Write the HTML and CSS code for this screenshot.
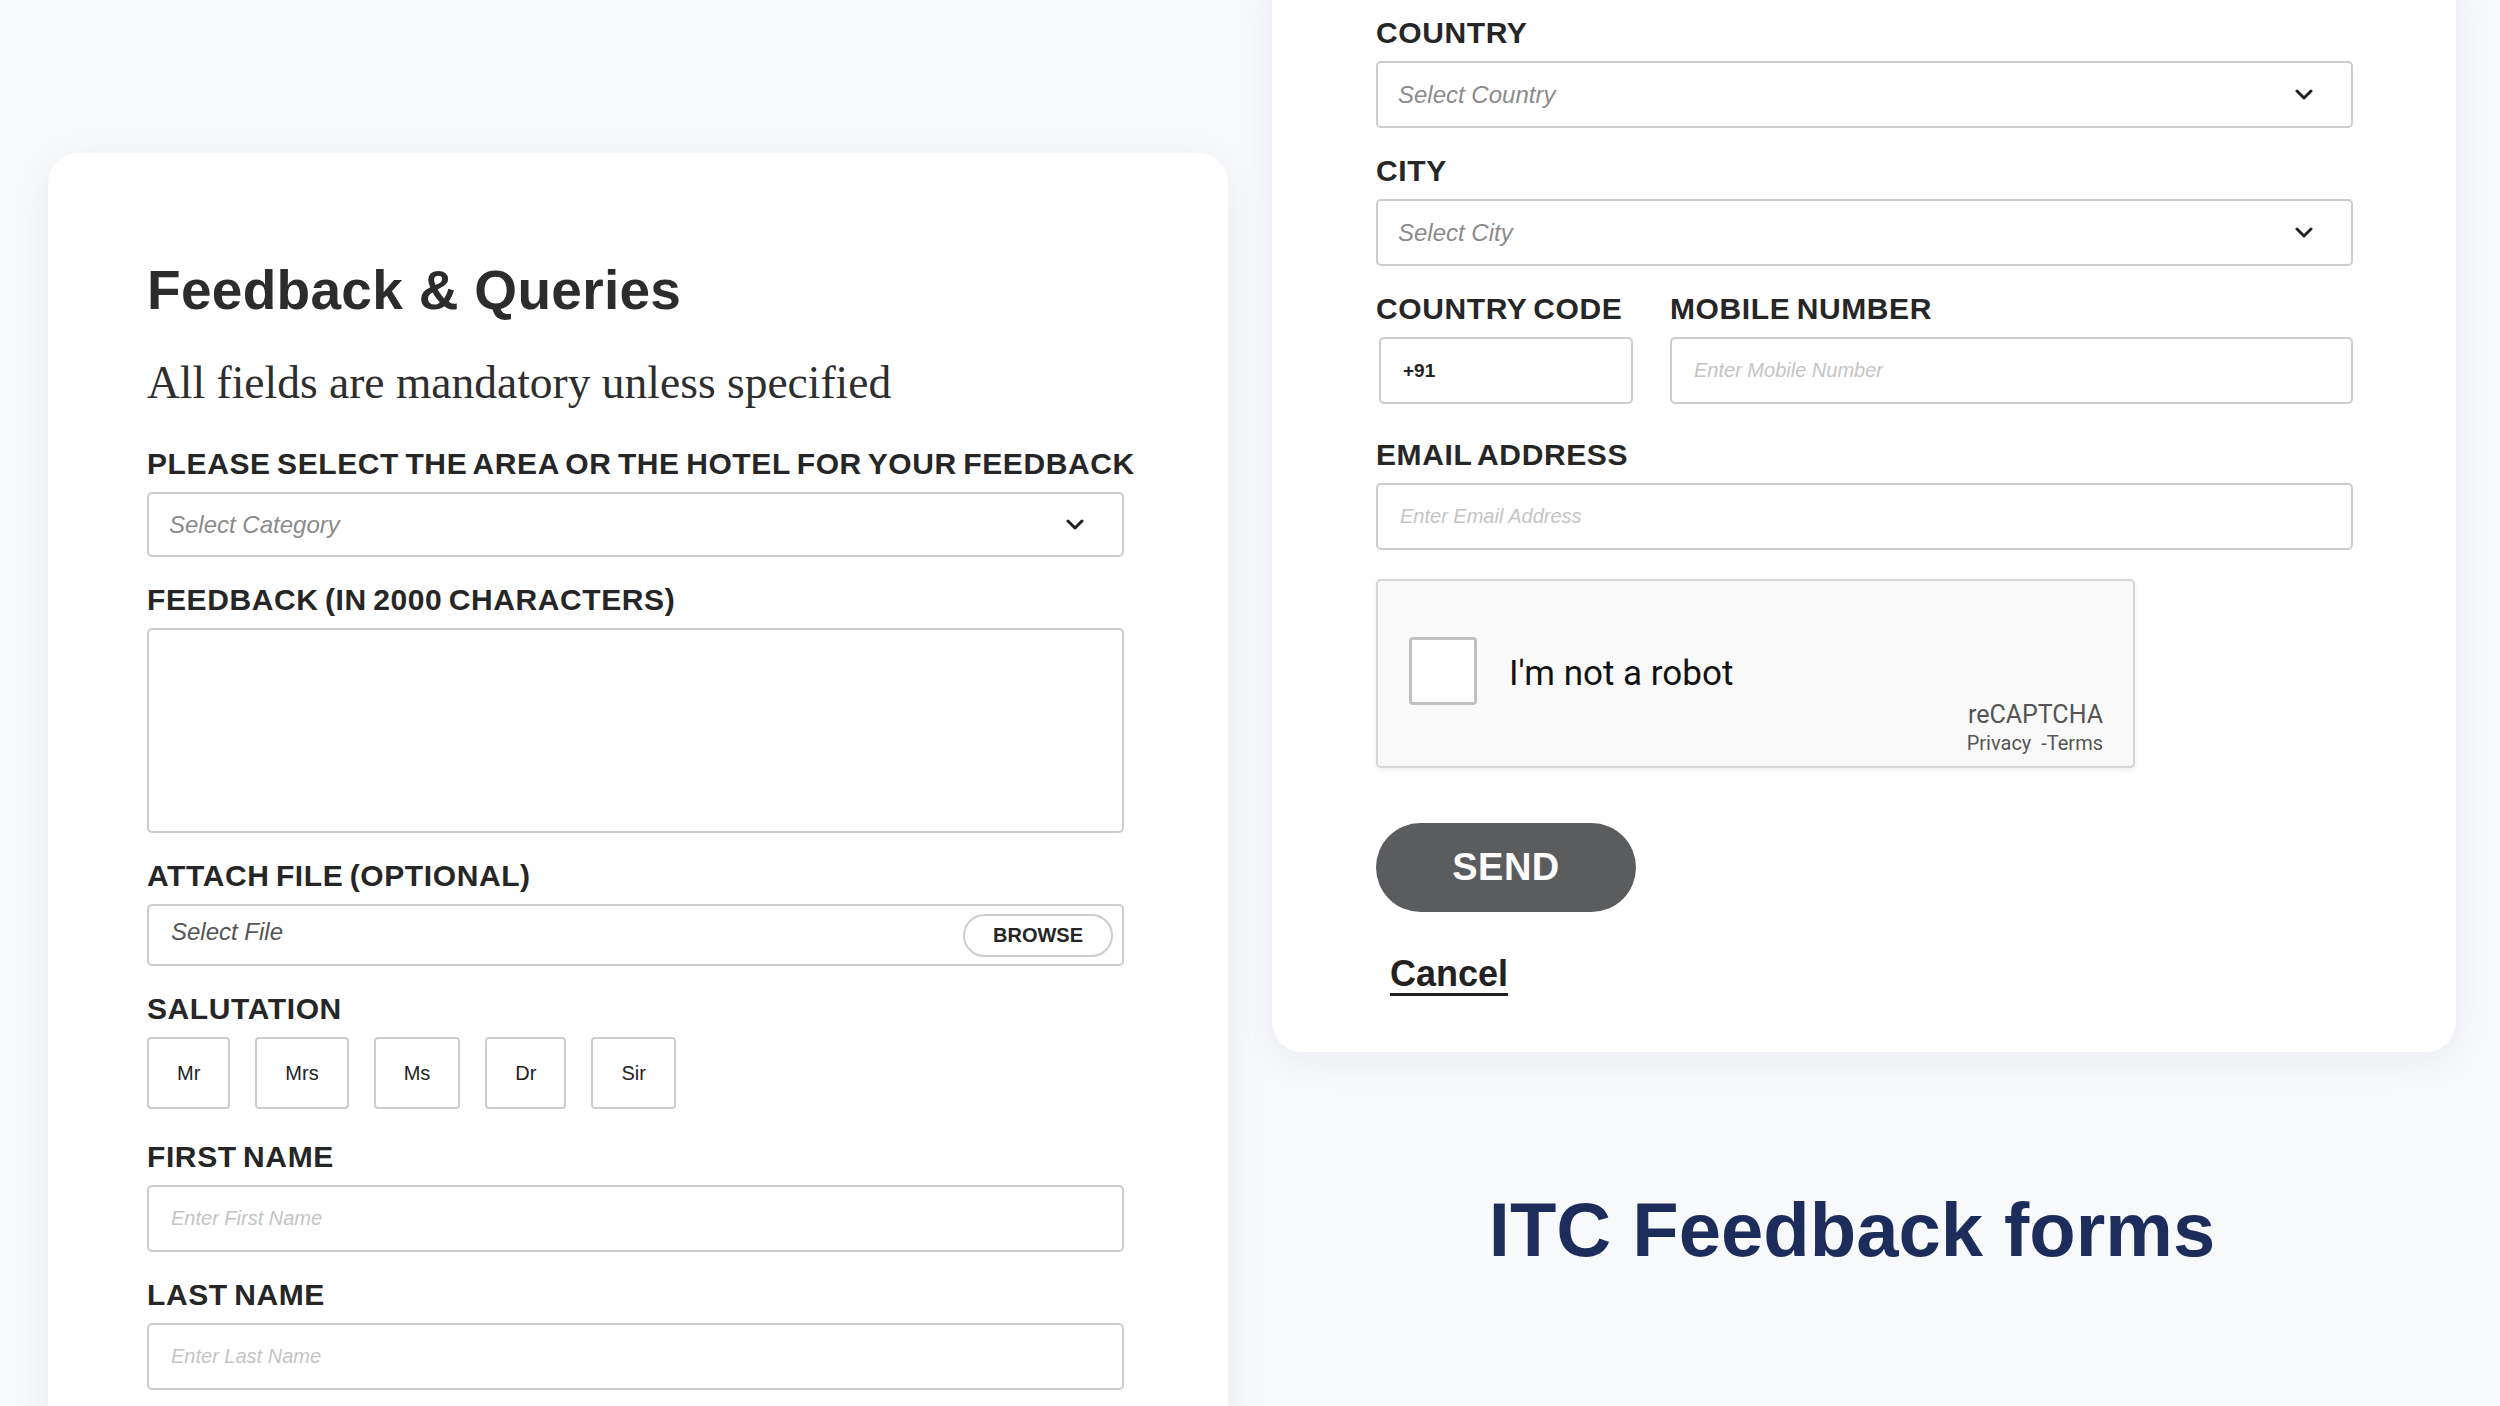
FILE: index.html
```html
<!DOCTYPE html>
<html lang="en">
<head>
<meta charset="utf-8">
<title>ITC Feedback forms</title>
<link rel="stylesheet" href="styles.css">
</head>
<body>
<div class="page">
  <section class="col-left">
    <div class="card card-left">
      <h1 class="title">Feedback &amp; Queries</h1>
      <p class="subtitle">All fields are mandatory unless specified</p>
      <div class="fields">
        <div class="field">
          <div class="label">PLEASE SELECT THE AREA OR THE HOTEL FOR YOUR FEEDBACK</div>
          <div class="box select h-select">
            <span class="ph-select">Select Category</span>
            <svg class="chev" viewBox="0 0 18 11" width="18" height="11"><path d="M2 2 L9 9 L16 2" fill="none" stroke="#222" stroke-width="3" stroke-linecap="round" stroke-linejoin="round"/></svg>
          </div>
        </div>
        <div class="field">
          <div class="label">FEEDBACK (IN 2000 CHARACTERS)</div>
          <div class="box h-area"></div>
        </div>
        <div class="field">
          <div class="label">ATTACH FILE (OPTIONAL)</div>
          <div class="box file h-file">
            <span class="ph-file">Select File</span>
            <span class="browse">BROWSE</span>
          </div>
        </div>
        <div class="field field-salute">
          <div class="label">SALUTATION</div>
          <div class="salutes">
            <span class="salute">Mr</span>
            <span class="salute">Mrs</span>
            <span class="salute">Ms</span>
            <span class="salute">Dr</span>
            <span class="salute">Sir</span>
          </div>
        </div>
        <div class="field">
          <div class="label">FIRST NAME</div>
          <div class="box text h-text"><span class="ph-light">Enter First Name</span></div>
        </div>
        <div class="field">
          <div class="label">LAST NAME</div>
          <div class="box text h-text"><span class="ph-light">Enter Last Name</span></div>
        </div>
      </div>
    </div>
  </section>

  <section class="col-right">
    <div class="card card-right">
      <div class="field">
        <div class="label">COUNTRY</div>
        <div class="box select h-text">
          <span class="ph-select">Select Country</span>
          <svg class="chev" viewBox="0 0 18 11" width="18" height="11"><path d="M2 2 L9 9 L16 2" fill="none" stroke="#222" stroke-width="3" stroke-linecap="round" stroke-linejoin="round"/></svg>
        </div>
      </div>
      <div class="field">
        <div class="label">CITY</div>
        <div class="box select h-text">
          <span class="ph-select">Select City</span>
          <svg class="chev" viewBox="0 0 18 11" width="18" height="11"><path d="M2 2 L9 9 L16 2" fill="none" stroke="#222" stroke-width="3" stroke-linecap="round" stroke-linejoin="round"/></svg>
        </div>
      </div>
      <div class="field row">
        <div class="code-col">
          <div class="label">COUNTRY CODE</div>
          <div class="box text h-text code-box"><span class="code">+91</span></div>
        </div>
        <div class="mobile-col">
          <div class="label">MOBILE NUMBER</div>
          <div class="box text h-text"><span class="ph-light">Enter Mobile Number</span></div>
        </div>
      </div>
      <div class="field field-email">
        <div class="label">EMAIL ADDRESS</div>
        <div class="box text h-text"><span class="ph-light">Enter Email Address</span></div>
      </div>
      <div class="captcha">
        <span class="cb"></span>
        <span class="robot">I'm not a robot</span>
        <div class="cap-brand">
          <span class="cap-name">reCAPTCHA</span>
          <span class="cap-links">Privacy&nbsp; -Terms</span>
        </div>
      </div>
      <div class="send">SEND</div>
      <div class="cancel">Cancel</div>
    </div>
    <div class="brand">ITC Feedback forms</div>
  </section>
</div>
</body>
</html>
```

FILE: styles.css
```css
* { box-sizing: border-box; }

html, body {
  margin: 0;
  padding: 0;
}

body {
  width: 2500px;
  height: 1406px;
  overflow: hidden;
  background: #f8f9fb;
  font-family: "Liberation Sans", Arial, sans-serif;
  color: #262626;
}

.page {
  display: flex;
  align-items: flex-start;
  gap: 44px;
  padding-left: 48px;
}

.card {
  background: #ffffff;
  border-radius: 30px;
  box-shadow: 0 8px 40px rgba(30, 40, 70, 0.06);
}

/* ---------- left ---------- */
.col-left {
  width: 1180px;
  margin-top: 153px;
}

.card-left {
  height: 1400px;
  padding: 104px 104px 0 99px;
}

.title {
  margin: 0;
  font-size: 55px;
  line-height: 66px;
  font-weight: 700;
  color: #2c2c2c;
  letter-spacing: 0.3px;
}

.subtitle {
  margin: 33px 0 0;
  font-family: "Liberation Serif", "Times New Roman", serif;
  font-size: 45.5px;
  line-height: 54px;
  font-weight: 400;
  color: #2e2e2e;
}

.fields {
  margin-top: 36px;
}

.field {
  margin-bottom: 25px;
}

.field-salute {
  margin-bottom: 30px;
}

.label {
  font-size: 30px;
  line-height: 36px;
  font-weight: 700;
  color: #262626;
  margin-bottom: 10px;
  white-space: nowrap;
  letter-spacing: 0.6px;
  word-spacing: -2.5px;
}

.box {
  border: 2px solid #cdcdcd;
  border-radius: 5px;
  background: #fff;
  display: flex;
  align-items: center;
  padding: 0 20px;
}

.h-select { height: 65px; }
.h-area { height: 205px; }
.h-file { height: 62px; }
.h-text { height: 67px; }

.select {
  justify-content: space-between;
  padding-right: 38px;
}

.ph-select {
  font-size: 24px;
  font-style: italic;
  color: #8b8b8b;
}

.chev {
  display: block;
}

.file {
  justify-content: space-between;
  padding-right: 9px;
}

.ph-file {
  font-size: 24px;
  font-style: italic;
  color: #555;
  padding-left: 2px;
  margin-top: -6px;
}

.browse {
  height: 43px;
  width: 150px;
  border: 2px solid #cdcdcd;
  border-radius: 22px;
  display: flex;
  align-items: center;
  justify-content: center;
  font-size: 20px;
  font-weight: 700;
  color: #262626;
}

.salutes {
  display: flex;
  gap: 25px;
}

.salute {
  height: 72px;
  padding: 0 28px;
  border: 2px solid #cdcdcd;
  border-radius: 4px;
  display: flex;
  align-items: center;
  font-size: 20px;
  color: #222;
}

.ph-light {
  font-size: 20px;
  font-style: italic;
  color: #c4c4c4;
  padding-left: 2px;
}

/* ---------- right ---------- */
.col-right {
  width: 1184px;
  display: flex;
  flex-direction: column;
}

.card-right {
  margin-top: -40px;
  padding: 55px 103px 56px 104px;
}

.row {
  display: flex;
  gap: 37px;
}

.code-col { width: 257px; }
.mobile-col { flex: 1; }

.code-box {
  margin-left: 3px;
  padding-left: 22px;
}

.code {
  font-size: 19px;
  font-weight: 700;
  color: #222;
}

.field-email {
  margin-top: 33px;
}

.captcha {
  margin-top: 29px;
  width: 759px;
  height: 189px;
  background: #f9f9f9;
  border: 2px solid #d6d6d6;
  border-radius: 5px;
  box-shadow: 0 2px 6px rgba(0, 0, 0, 0.08);
  display: flex;
  align-items: center;
  padding: 0 30px 0 31px;
}

.cb {
  width: 68px;
  height: 68px;
  border: 3px solid #c1c1c1;
  border-radius: 4px;
  background: #fff;
  margin-top: -6px;
}

.robot {
  font-family: Roboto, "Liberation Sans", sans-serif;
  font-size: 35px;
  color: #111;
  margin-left: 32px;
}

.cap-brand {
  margin-left: auto;
  align-self: flex-end;
  margin-bottom: 10px;
  display: flex;
  flex-direction: column;
  align-items: flex-end;
  font-family: Roboto, "Liberation Sans", sans-serif;
  color: #555;
}

.cap-name {
  font-size: 25px;
  line-height: 30px;
}

.cap-links {
  font-size: 20px;
  line-height: 26px;
}

.send {
  margin-top: 55px;
  width: 260px;
  height: 89px;
  border-radius: 45px;
  background: #5b5c5e;
  color: #fff;
  font-size: 38px;
  font-weight: 700;
  display: flex;
  align-items: center;
  justify-content: center;
  letter-spacing: 0.5px;
}

.cancel {
  margin-top: 40px;
  margin-left: 14px;
  font-size: 36px;
  line-height: 44px;
  font-weight: 700;
  color: #222;
  text-decoration: underline;
  text-decoration-thickness: 3px;
  text-underline-offset: 7px;
}

.brand {
  margin-top: 133px;
  padding-right: 24px;
  text-align: center;
  font-size: 76px;
  line-height: 90px;
  font-weight: 700;
  color: #1c2c5b;
}
```
